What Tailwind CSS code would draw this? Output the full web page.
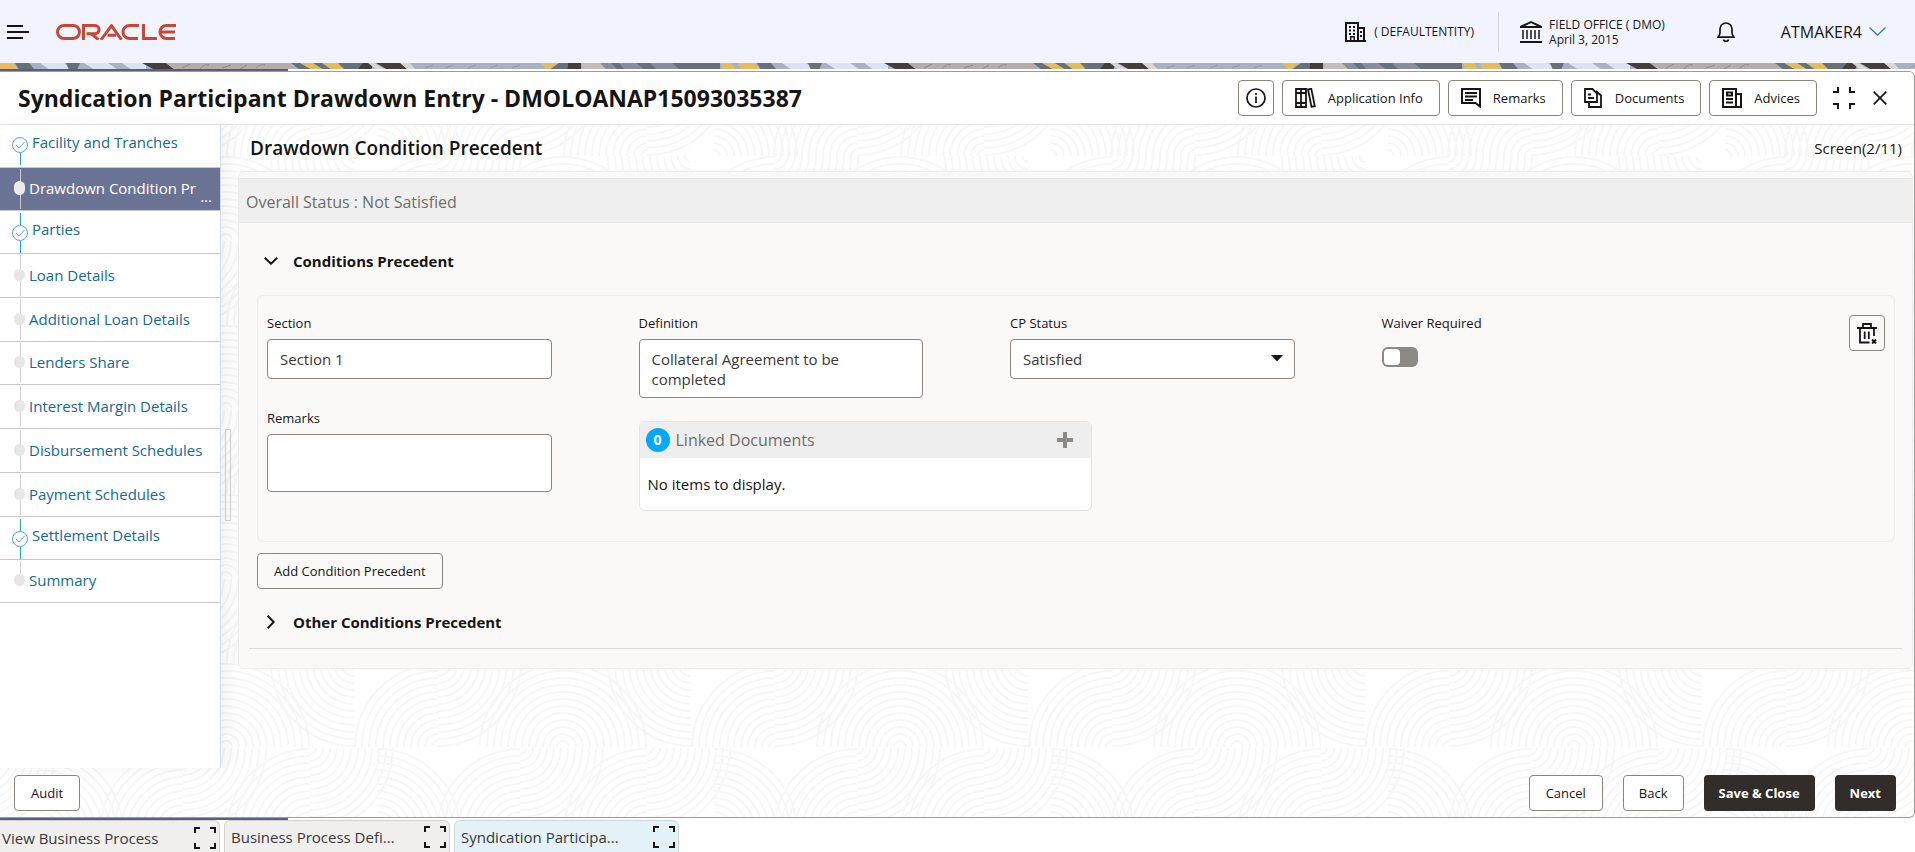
<!DOCTYPE html>
<html lang="en">
<head>
<meta charset="utf-8">
<title>Syndication Participant Drawdown Entry</title>
<script src="https://cdn.jsdelivr.net/npm/@tailwindcss/browser@4"></script>
</head>
<body class="flex h-screen flex-col overflow-hidden bg-white font-['Open_Sans',sans-serif] text-[15px] leading-5 text-[#161513]">

<!-- Application header -->
<header class="flex h-[63px] shrink-0 items-center bg-[#f1f4ff] pr-[29px] pl-[7px]">
  <button aria-label="Menu" class="shrink-0">
    <svg width="22" height="14" viewBox="0 0 22 14" fill="#161513"><path d="M0 0h16v2H0zM0 6h22v2H0zM0 12h16v2H0z"/></svg>
  </button>
  <svg role="img" aria-label="Oracle" class="ml-[27px]" width="120" height="16" viewBox="0 0 120 16" fill="none" stroke="#c74634" stroke-width="3">
    <path d="M8 1.500h9a6.500 6.500 0 0 1 0 13H8A6.500 6.500 0 0 1 8 1.500z"/>
    <path d="M27.500 16V1.500H39a4.100 4.100 0 0 1 0 8.200H30.500M35 9.700l7.500 6"/>
    <path d="M45 15.800L55.500 1.700l10 14.100M51.500 11.300H60"/>
    <path d="M83 1.500H73.500a6.500 6.500 0 0 0 0 13H82"/>
    <path d="M87.500 0v14.500H101"/>
    <path d="M120 1.500h-9.500a6.500 6.500 0 0 0 0 13H119M104 8h15"/>
  </svg>
  <div class="ml-auto flex items-center">
    <svg width="21" height="20" viewBox="0 0 21 20" fill="none" stroke="#161513" stroke-width="2"><path d="M1 19V1h12v18M13 6h6v13M0 19h21"/><path stroke-width="1.500" d="M5.700 19v-4.200h3.500V19"/><path fill="#161513" stroke="none" d="M4 4h2v2H4zM8 4h2v2H8zM4 7.500h2v2H4zM8 7.500h2v2H8zM4 11h2v2H4zM8 11h2v2H8zM15 9h2v2h-2zM15 13h2v2h-2z"/></svg>
    <span class="ml-2 text-xs leading-4">( DEFAULTENTITY)</span>
    <span class="ml-6 h-10 w-px bg-[#d5d7e0]"></span>
    <svg class="ml-[21px]" width="22" height="22" viewBox="0 0 22 22" fill="none" stroke="#161513" stroke-width="2"><path d="M0 21h22"/><path fill="#161513" stroke="none" fill-rule="evenodd" d="M11 0L0 5v2h22V5zM11 2l6 3H5z"/><path stroke-width="1.500" d="M3 9v9M7 9v9M11 9v9M15 9v9M19 9v9"/></svg>
    <div class="ml-[7px] text-xs leading-[15px]">FIELD OFFICE ( DMO)<br>April 3, 2015</div>
    <button aria-label="Notifications" class="ml-13">
      <svg width="18" height="20" viewBox="0 0 18 20" fill="none" stroke="#161513" stroke-width="1.700"><path d="M1 15.200h16c-1.200-1.400-2-2.400-2-4.500V7A6 6 0 0 0 3 7v3.700c0 2.100-.8 3.100-2 4.500z"/><path d="M6.500 17.500a2.600 2.600 0 0 0 5 0"/></svg>
    </button>
    <button class="ml-[46px] flex items-center gap-[7px] text-base leading-5">ATMAKER4
      <svg width="17" height="9" viewBox="0 0 17 9" fill="none" stroke="#3579a8" stroke-width="1.300"><path d="M.5.5l8 7.700 8-7.700"/></svg>
    </button>
  </div>
</header>

<!-- Decorative strip -->
<svg class="h-1.5 w-full shrink-0" aria-hidden="true">
  <defs>
    <pattern id="strip" width="742" height="7" patternUnits="userSpaceOnUse">
      <path fill="#a9b2c3" d="M0 0h742v7H0z"/>
      <path fill="#e5bb62" d="M0 0h13l6 7H0z"/><path fill="#667179" d="M15 0h14l6 7H19z"/>
      <path fill="#dbe4f3" d="M40 0h24l9 7H50zM84 0h24l10 7H95zM122 0h24v7h-14z"/><path fill="#667179" d="M66 0h14l-3 7h-8z"/>
      <path fill="#433f3c" d="M142 0h24l9 7h-20z"/>
      <path fill="#b5aea8" d="M166 0h127v7H175z"/>
      <path stroke="#8f8984" stroke-width="1" fill="none" d="M182 5l8-4M200 6c3-4 6-5 9-4M222 5l9-3M240 6l7-4M256 5c3-3 6-4 9-3"/>
      <path fill="#667179" d="M291 0h75v7h-66z"/><path fill="#e5bb62" d="M300 0h13l11 7h-12zM322 0h16l7 7h-13z"/>
      <path fill="#433f3c" d="M363 0h11l-3 7h-14zM376 0h25l9 7h-22z"/><path fill="#d9d7d3" d="M368 0h6l12 7h-9zM400 0h10l6 7h-8z"/>
      <path stroke="#8f99ab" fill="none" d="M425 5l8-3M445 5l8-3M468 5l8-3M490 5l8-3M512 5l8-3"/>
      <path fill="#e5bb62" d="M539 0h19l-10 7z"/><path fill="#667179" d="M559 0h9l-1 7h-18z"/>
      <path fill="#433f3c" d="M568 0h13v7h-14z"/><path fill="#c3beb8" d="M582 0h18l7 7h-25z"/>
      <path fill="#8a8d9e" d="M600 0h92l8 7h-93z"/><path fill="#667179" d="M611 0h8l6 7h-7zM636 0h14l7 7h-12zM672 0h48v7h-40z"/>
      <path fill="#e5bb62" d="M720 0h12l4 7h-12zM738 0h4v7h-1z"/>
    </pattern>
  </defs>
  <rect width="100%" height="7" fill="url(#strip)"/>
</svg>
<div class="h-0.5 shrink-0 bg-white"><div class="h-0.5 w-72 bg-[#5a5c83]"></div></div>

<!-- Task window -->
<section class="relative flex min-h-0 flex-1 flex-col overflow-hidden rounded-r-md border-y border-r border-[#9e9c99]">
  <svg class="absolute inset-0 h-full w-full" aria-hidden="true">
    <defs>
      <g id="rings" fill="none" stroke="#f6f6f6" stroke-width="2"><circle r="6"/><circle r="13"/><circle r="20"/><circle r="27"/><circle r="34"/><circle r="41"/><circle r="48"/><circle r="55"/><circle r="62"/><circle r="69"/><circle r="76"/><circle r="83"/></g>
      <symbol id="q-ul" viewBox="0 0 84 84"><use href="#rings" x="84" y="84"/></symbol>
      <symbol id="q-ur" viewBox="0 0 84 84"><use href="#rings" x="0" y="84"/></symbol>
      <symbol id="q-lr" viewBox="0 0 84 84"><use href="#rings" x="0" y="0"/></symbol>
      <symbol id="q-ll" viewBox="0 0 84 84"><use href="#rings" x="84" y="0"/></symbol>
      <pattern id="waves" x="226" y="84" width="337" height="169" patternUnits="userSpaceOnUse">
        <use href="#q-ur" x="0" y="0" width="84" height="84"/>
        <use href="#q-ll" x="44" y="0" width="84" height="84"/>
        <use href="#q-ul" x="128" y="0" width="84" height="84"/>
        <use href="#q-lr" x="212" y="0" width="84" height="84"/>
        <use href="#q-ul" x="253" y="0" width="84" height="84"/>
        <use href="#q-ul" x="0" y="85" width="84" height="84"/>
        <use href="#q-lr" x="84" y="85" width="84" height="84"/>
        <use href="#q-ur" x="151" y="85" width="84" height="84"/>
        <use href="#q-ul" x="210" y="85" width="84" height="84"/>
        <use href="#q-lr" x="294" y="85" width="84" height="84"/>
        <use href="#q-lr" x="-43" y="85" width="84" height="84"/>
      </pattern>
    </defs>
    <rect width="100%" height="100%" fill="url(#waves)"/>
  </svg>

  <!-- Title bar -->
  <div class="relative flex h-[53px] shrink-0 items-center gap-2 border-b border-[#e1e1e1] bg-white pr-[27px] pl-[18px]">
    <h1 class="mr-auto text-[23px] leading-7 font-bold">Syndication Participant Drawdown Entry - DMOLOANAP15093035387</h1>
    <button aria-label="Information" class="flex size-9 items-center justify-center rounded border border-[#8b8580]">
      <svg width="20" height="20" viewBox="0 0 20 20" fill="none" stroke="#161513" stroke-width="1.700"><circle cx="10" cy="10" r="9"/><path d="M10 8.500V15M10 5v2"/></svg>
    </button>
    <button class="flex h-9 items-center gap-3 rounded border border-[#8b8580] px-4 pl-3 text-[13px] font-medium">
      <svg width="21" height="20" viewBox="0 0 21 20" fill="none" stroke="#161513" stroke-width="1.800"><path d="M1 1h10v18H1zM6 1v18M1 5h10M1 15h10M13 1.500l3.300-.6 3.500 17.300-3.300.6z"/></svg>
      Application Info</button>
    <button class="flex h-9 items-center gap-3 rounded border border-[#8b8580] px-4 pl-3 text-[13px] font-medium">
      <svg width="20" height="20" viewBox="0 0 20 20" fill="none" stroke="#161513" stroke-width="2"><path d="M1 1h18v17.500L14.500 15H1zM4 5h12M4 8.500h12M4 12h8"/></svg>
      Remarks</button>
    <button class="flex h-9 items-center gap-3 rounded border border-[#8b8580] px-4 pl-3 text-[13px] font-medium">
      <svg width="19" height="20" viewBox="0 0 19 20" fill="none" stroke="#161513" stroke-width="1.800"><path d="M1 1h7.500L13 5.500V14H1zM4 6.500h3M4 10h6M5 14v5h12V7.500L12 3"/></svg>
      Documents</button>
    <button class="flex h-9 items-center gap-3 rounded border border-[#8b8580] px-4 pl-3 text-[13px] font-medium">
      <svg width="20" height="20" viewBox="0 0 20 20" fill="none" stroke="#161513" stroke-width="2"><path d="M1 1h13v18H1zM14 6h5v13h-5M4 11h7M4 14.500h7"/><path d="M5 4.500h5v3H5z"/></svg>
      Advices</button>
    <button aria-label="Collapse" class="ml-2">
      <svg width="22" height="22" viewBox="0 0 22 22" fill="none" stroke="#161513" stroke-width="2"><path d="M0 5h5V0M17 0v5h5M0 17h5v5M17 22v-5h5"/></svg>
    </button>
    <button aria-label="Close" class="ml-2.5">
      <svg width="14" height="14" viewBox="0 0 14 14" fill="none" stroke="#161513" stroke-width="1.700"><path d="M.7.7l12.600 12.600M13.300.7L.7 13.300"/></svg>
    </button>
  </div>

  <div class="relative flex min-h-0 flex-1">
    <!-- Steps -->
    <nav aria-label="Steps" class="w-[221px] shrink-0 border-r border-[#cfdce8] bg-white text-[#13699b] shadow-[8px_0_16px_rgba(0,0,0,0.05)]">
      <ol>
        <li class="relative flex h-[43px] items-center border-b border-[#c8c8c8] pb-2 pl-3">
          <span class="absolute top-7 left-5 h-3 w-px bg-[#1aa3ec]"></span>
          <svg class="mt-1.5 mr-1" width="16" height="16" viewBox="0 0 16 16" fill="none" stroke="#4ba6da" stroke-width="1"><circle cx="8" cy="8" r="7.500"/><path d="M4 8l3 3 5.500-6"/></svg><a href="#">Facility and Tranches</a></li>
        <li aria-current="step" class="relative flex h-[43px] items-center border-b border-[#c8c8c8] bg-[#6b7394] pb-0.5 pl-3.5 text-white">
          <span class="absolute inset-y-px left-5 w-px bg-[#c9c9cf]"></span>
          <span class="relative mr-1 h-3.5 w-[11px] rounded-full bg-[#ececec]"></span><a href="#">Drawdown Condition Pr</a><span class="absolute right-2 bottom-1">...</span></li>
        <li class="relative flex h-[43px] items-center border-b border-[#c8c8c8] pb-1.5 pl-3">
          <span class="absolute top-0.5 left-5 h-3 w-px bg-[#1aa3ec]"></span><span class="absolute top-[30px] left-5 h-3 w-px bg-[#1aa3ec]"></span>
          <svg class="mt-2 mr-1" width="16" height="16" viewBox="0 0 16 16" fill="none" stroke="#4ba6da" stroke-width="1"><circle cx="8" cy="8" r="7.500"/><path d="M4 8l3 3 5.500-6"/></svg><a href="#">Parties</a></li>
        <li class="relative flex h-11 items-center border-b border-[#c8c8c8] pb-0.5 pl-3.5">
          <span class="absolute inset-y-px left-5 w-px bg-[#d3d3d3]"></span>
          <span class="relative mr-1 h-3 w-[11px] rounded-full bg-[#e6e6e6]"></span><a href="#">Loan Details</a></li>
        <li class="relative flex h-11 items-center border-b border-[#c8c8c8] pb-0.5 pl-3.5">
          <span class="absolute inset-y-px left-5 w-px bg-[#d3d3d3]"></span>
          <span class="relative mr-1 h-3 w-[11px] rounded-full bg-[#e6e6e6]"></span><a href="#">Additional Loan Details</a></li>
        <li class="relative flex h-[43px] items-center border-b border-[#c8c8c8] pb-0.5 pl-3.5">
          <span class="absolute inset-y-px left-5 w-px bg-[#d3d3d3]"></span>
          <span class="relative mr-1 h-3 w-[11px] rounded-full bg-[#e6e6e6]"></span><a href="#">Lenders Share</a></li>
        <li class="relative flex h-11 items-center border-b border-[#c8c8c8] pb-0.5 pl-3.5">
          <span class="absolute inset-y-px left-5 w-px bg-[#d3d3d3]"></span>
          <span class="relative mr-1 h-3 w-[11px] rounded-full bg-[#e6e6e6]"></span><a href="#">Interest Margin Details</a></li>
        <li class="relative flex h-11 items-center border-b border-[#c8c8c8] pb-0.5 pl-3.5">
          <span class="absolute inset-y-px left-5 w-px bg-[#d3d3d3]"></span>
          <span class="relative mr-1 h-3 w-[11px] rounded-full bg-[#e6e6e6]"></span><a href="#">Disbursement Schedules</a></li>
        <li class="relative flex h-11 items-center border-b border-[#c8c8c8] pb-0.5 pl-3.5">
          <span class="absolute inset-y-px left-5 w-px bg-[#d3d3d3]"></span>
          <span class="relative mr-1 h-3 w-[11px] rounded-full bg-[#e6e6e6]"></span><a href="#">Payment Schedules</a></li>
        <li class="relative flex h-[43px] items-center border-b border-[#c8c8c8] pb-1.5 pl-3">
          <span class="absolute top-0.5 left-5 h-3 w-px bg-[#1aa3ec]"></span><span class="absolute top-[30px] left-5 h-3 w-px bg-[#1aa3ec]"></span>
          <svg class="mt-2 mr-1" width="16" height="16" viewBox="0 0 16 16" fill="none" stroke="#4ba6da" stroke-width="1"><circle cx="8" cy="8" r="7.500"/><path d="M4 8l3 3 5.500-6"/></svg><a href="#">Settlement Details</a></li>
        <li class="relative flex h-[43px] items-center border-b border-[#c8c8c8] pb-0.5 pl-3.5">
          <span class="absolute top-px left-5 h-4 w-px bg-[#d3d3d3]"></span>
          <span class="relative mr-1 h-3 w-[11px] rounded-full bg-[#e6e6e6]"></span><a href="#">Summary</a></li>
      </ol>
    </nav>
    <div class="flex w-[17px] shrink-0 items-center pl-1"><span class="mt-14 h-[92px] w-1.5 border border-[#cbcbcb]"></span></div>

    <!-- Step content -->
    <main class="min-w-0 flex-1">
      <div class="flex h-[46px] items-center justify-between pr-3 pl-3">
        <h2 class="text-[19px] leading-6 font-semibold">Drawdown Condition Precedent</h2>
        <span>Screen(2/11)</span>
      </div>
      <div class="mr-px rounded-md border border-[#ececec] bg-[#faf9f8] pt-1.5 pb-[19px]">
        <div class="flex h-[45px] items-center border-y border-[#e6e6e6] bg-[#efefef] pt-0.5 pl-[7px] text-base text-[#6f6d6b]">Overall Status : Not Satisfied</div>
        <div class="mx-2.5 border-b border-[#dedcda]">
          <h3>
            <button aria-expanded="true" class="mt-7 flex items-center pl-[15px] font-bold">
              <svg class="mr-[15px]" width="14" height="8" viewBox="0 0 14 8" fill="none" stroke="#161513" stroke-width="2"><path d="M.7.700l6.300 6 6.300-6"/></svg>Conditions Precedent</button>
          </h3>
          <div class="mt-6 mr-[7px] ml-2 flex rounded-md border border-[#efeeec] px-[9px] pt-[17px] pb-[30px]">
            <div class="grid flex-1 grid-cols-4 items-start pr-24">
              <div class="pr-[87px]">
                <label for="section" class="mb-1.5 block text-[13px]">Section</label>
                <input id="section" value="Section 1" class="block h-10 w-full rounded border border-[#8b8580] bg-white px-3 text-[#3a3836]">
                <label for="remarks" class="mt-[29px] mb-1.5 block text-[13px]">Remarks</label>
                <textarea id="remarks" class="block h-[58px] w-full resize-none rounded border border-[#8b8580] bg-white px-3 py-2"></textarea>
              </div>
              <div>
                <div class="pr-[87px]">
                  <label for="definition" class="mb-1.5 block text-[13px]">Definition</label>
                  <textarea id="definition" class="block h-[59px] w-full resize-none overflow-hidden rounded border border-[#8b8580] bg-white px-3 py-[9px] text-[#3a3836]">Collateral Agreement to be
completed</textarea>
                </div>
                <div class="relative z-10 mt-[23px] w-[122%] overflow-hidden rounded-md border border-[#e6e4e2] bg-white">
                  <div class="flex h-9 items-center bg-[#eeeeee] pr-[18px] pl-1.5">
                    <span class="mr-1.5 flex size-6 items-center justify-center rounded-full bg-[#04aaf8] text-sm font-bold text-white">0</span>
                    <span class="text-base text-[#6f6d6b]">Linked Documents</span>
                    <button aria-label="Add document" class="ml-auto"><svg width="16" height="16" viewBox="0 0 16 16" fill="#8c8a88"><path d="M6 0h4v6h6v4h-6v6H6v-6H0V6h6z"/></svg></button>
                  </div>
                  <p class="px-2 py-4">No items to display.</p>
                </div>
              </div>
              <div class="pr-[87px]">
                <label for="status" class="mb-1.5 block text-[13px]">CP Status</label>
                <div class="relative">
                  <select id="status" class="block h-10 w-full appearance-none rounded border border-[#8b8580] bg-white px-3 text-[#3a3836]"><option>Satisfied</option></select>
                  <svg class="pointer-events-none absolute top-4 right-3" width="12" height="7" viewBox="0 0 12 7" fill="#161513"><path d="M0 0h12L6 6.500z"/></svg>
                </div>
              </div>
              <div>
                <label for="waiver" class="mb-3.5 block text-[13px]">Waiver Required</label>
                <div class="relative flex h-5 w-9">
                  <input id="waiver" type="checkbox" role="switch" class="h-5 w-9 appearance-none rounded-md bg-[#8b8985]">
                  <span class="pointer-events-none absolute top-0.5 left-0.5 h-4 w-4 rounded bg-white"></span>
                </div>
              </div>
            </div>
            <button aria-label="Delete condition" class="mt-0.5 flex size-9 shrink-0 items-center justify-center rounded border border-[#8b8580]">
              <svg width="20" height="21" viewBox="0 0 20 21" fill="none" stroke="#161513" stroke-width="1.800"><path d="M0 5h20M6 5V1h8v4M3 5v14.500h9.500M17 5v8M7.700 8.500v7.500M11.800 8.500v7.500M15 16.500l4 4M19 16.500l-4 4"/></svg>
            </button>
          </div>
          <button class="mt-[11px] ml-2 block h-9 rounded border border-[#8b8580] px-4 text-[13px] font-medium">Add Condition Precedent</button>
          <h3>
            <button aria-expanded="false" class="mt-[23px] mb-4 flex items-center pl-[18px] font-bold">
              <svg class="mr-[18px]" width="8" height="14" viewBox="0 0 8 14" fill="none" stroke="#161513" stroke-width="2"><path d="M.7.700l6 6.300-6 6.300"/></svg>Other Conditions Precedent</button>
          </h3>
        </div>
      </div>
    </main>
  </div>

  <!-- Actions -->
  <div class="relative flex h-[49px] shrink-0 items-start pt-[7px] pr-[18px] pl-3.5 text-[13px]">
    <button class="h-9 rounded border border-[#8b8580] bg-white px-4 font-medium">Audit</button>
    <div class="ml-auto flex gap-5">
      <button class="h-9 rounded border border-[#8b8580] bg-white px-4 font-medium">Cancel</button>
      <button class="h-9 rounded border border-[#8b8580] bg-white px-[15px] font-medium">Back</button>
      <button class="h-9 rounded bg-[#312d2a] px-[15px] font-bold text-white">Save &amp; Close</button>
      <button class="h-9 rounded bg-[#312d2a] px-[15px] font-bold text-white">Next</button>
    </div>
  </div>
</section>

<!-- Open task tabs -->
<footer class="h-[34px] shrink-0 overflow-hidden">
  <div class="h-0.5 w-72 bg-[#5a5c83]"></div>
  <div class="flex gap-1 leading-5 text-[#3a3836]">
    <div class="flex h-[34px] w-[220px] items-center justify-between rounded-tr-md border-t border-r border-[#d4d2d0] bg-[#f1efed] pr-[3px] pl-0.5"><span>View Business Process</span>
      <button aria-label="Expand"><svg width="22" height="22" viewBox="0 0 22 22" fill="none" stroke="#161513" stroke-width="2"><path d="M1 6V1h5M16 1h5v5M1 16v5h5M21 16v5h-5"/></svg></button></div>
    <div class="flex h-[34px] w-[226px] items-center justify-between rounded-t-md border border-[#d4d2d0] bg-[#f1efed] pr-[3px] pl-1.5"><span>Business Process Defi...</span>
      <button aria-label="Expand"><svg width="22" height="22" viewBox="0 0 22 22" fill="none" stroke="#161513" stroke-width="2"><path d="M1 6V1h5M16 1h5v5M1 16v5h5M21 16v5h-5"/></svg></button></div>
    <div class="flex h-[34px] w-[225px] items-center justify-between rounded-t-md border border-[#cdd8de] bg-[#e4f1f7] pr-[3px] pl-1.5"><span>Syndication Participa...</span>
      <button aria-label="Expand"><svg width="22" height="22" viewBox="0 0 22 22" fill="none" stroke="#161513" stroke-width="2"><path d="M1 6V1h5M16 1h5v5M1 16v5h5M21 16v5h-5"/></svg></button></div>
  </div>
</footer>
</body>
</html>
